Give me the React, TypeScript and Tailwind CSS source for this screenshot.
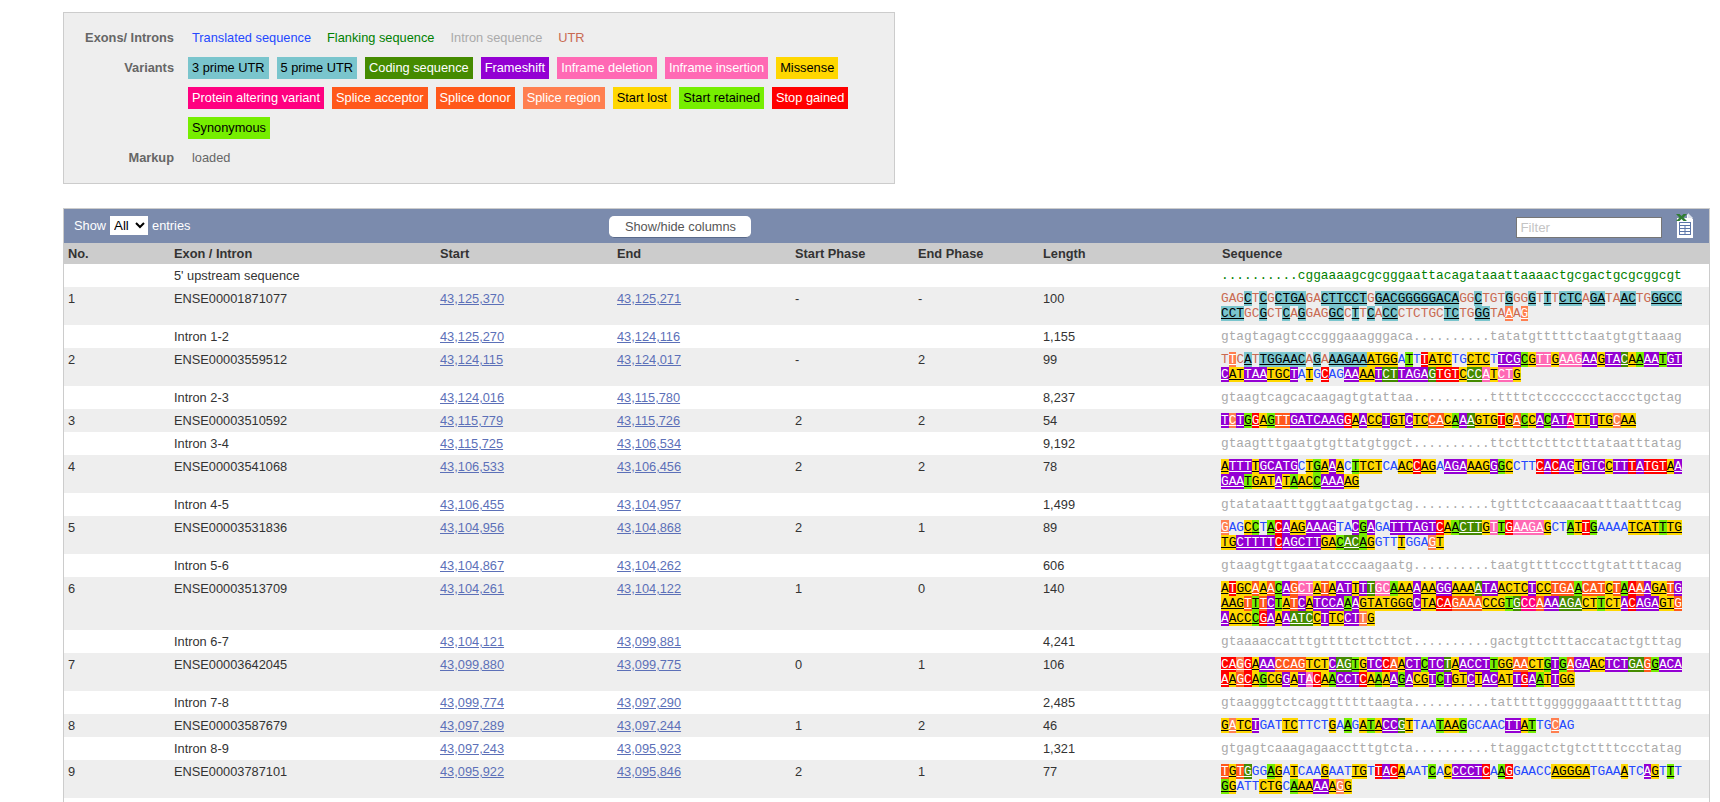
import { Fragment } from "react";

const spanColors: Record<string, string> = {
  u: "bg-[#7ac5cd] text-black underline",
  c: "bg-[#458b00] text-white underline",
  f: "bg-[#9400d3] text-white underline",
  d: "bg-[#ff69b4] text-white underline",
  m: "bg-[#ffd700] text-black underline",
  p: "bg-[#ff0080] text-white underline",
  a: "bg-[#ff581a] text-white underline",
  r: "bg-[#ff7f50] text-white underline",
  t: "bg-[#76ee00] text-black underline",
  s: "bg-[#ff0000] text-white underline",
  x: "text-[#c96a52]",
};

const variants = [
  { label: "3 prime UTR", cls: "bg-[#7ac5cd] text-black" },
  { label: "5 prime UTR", cls: "bg-[#7ac5cd] text-black" },
  { label: "Coding sequence", cls: "bg-[#458b00] text-white" },
  { label: "Frameshift", cls: "bg-[#9400d3] text-white" },
  { label: "Inframe deletion", cls: "bg-[#ff69b4] text-white" },
  { label: "Inframe insertion", cls: "bg-[#ff69b4] text-white" },
  { label: "Missense", cls: "bg-[#ffd700] text-black" },
  { label: "Protein altering variant", cls: "bg-[#ff0080] text-white" },
  { label: "Splice acceptor", cls: "bg-[#ff581a] text-white" },
  { label: "Splice donor", cls: "bg-[#ff581a] text-white" },
  { label: "Splice region", cls: "bg-[#ff7f50] text-white" },
  { label: "Start lost", cls: "bg-[#ffd700] text-black" },
  { label: "Start retained", cls: "bg-[#76ee00] text-black" },
  { label: "Stop gained", cls: "bg-[#ff0000] text-white" },
  { label: "Synonymous", cls: "bg-[#76ee00] text-black" },
];

interface Row {
  no?: string;
  name: string;
  start?: string;
  end?: string;
  startPhase?: string;
  endPhase?: string;
  length?: string;
  seq: string[];
  tone: string;
}

const BLUE = "text-[#2448ff]";
const UTR = "text-[#c96a52]";
const GREY = "text-[#aaaaaa]";
const FLANK = "text-[#008000]";

const rows: Row[] = [
  { name: "5' upstream sequence", tone: FLANK, seq: ["..........cggaaaagcgcgggaattacagataaattaaaactgcgactgcgcggcgt"] },
  {
    no: "1", name: "ENSE00001871077", start: "43,125,370", end: "43,125,271", startPhase: "-", endPhase: "-", length: "100", tone: UTR,
    seq: [
      "GAG[uC]T[uC]G[uCTGA]GA[uCTTCCT]G[uGACGGGGGACA]GG[uC]TGT[uG]GG[uG]T[uT]T[uCTC]A[uGA]TA[uAC]TG[uGGCC]",
      "[uCCT]GC[uG]CT[uC]A[uG]GAG[uGC]C[uT]T[uC]A[uCC]CTCTGC[uTC]TG[uGG]TA[rA]A[rG]",
    ],
  },
  { name: "Intron 1-2", start: "43,125,270", end: "43,124,116", length: "1,155", tone: GREY, seq: ["gtagtagagtcccgggaaagggaca..........tatatgtttttctaatgtgttaaag"] },
  {
    no: "2", name: "ENSE00003559512", start: "43,124,115", end: "43,124,017", startPhase: "-", endPhase: "2", length: "99", tone: BLUE,
    seq: [
      "[xT][rT][xC][uA][xT][uTGGAAC][xA][uG][xA][uAAGAA][mATGG]A[tT]T[sT][mATC]TG[mCTC]T[fTCG][tC][mG][dTT][mG][dAAG][fAA][mG][fTA][cC][mA][tA][fAA][tT][fGT]",
      "[fC][mAT][fTAA][mTGC][fT]A[mT]G[sC]AG[fAA][mAA][fT][cCT][fTAGA][cG][sTGT][mC][cCC][dA][mT][dCT][mG]",
    ],
  },
  { name: "Intron 2-3", start: "43,124,016", end: "43,115,780", length: "8,237", tone: GREY, seq: ["gtaagtcagcacaagagtgtattaa..........tttttctccccccctaccctgctag"] },
  {
    no: "3", name: "ENSE00003510592", start: "43,115,779", end: "43,115,726", startPhase: "2", endPhase: "2", length: "54", tone: BLUE,
    seq: ["[fT][rC][fT][tG][sG][mA][tG][aTT][fGATCAAG][sG][mA][fA][mCC][fT][mGT][fC][mTC][aCA][mC][tA][fA][cA][mGTG][sT][mG][aA][tC][mC][fA][tC][fAT][pA][mTT][fT][mTG][rC][mAA]"],
  },
  { name: "Intron 3-4", start: "43,115,725", end: "43,106,534", length: "9,192", tone: GREY, seq: ["gtaagtttgaatgtgttatgtggct..........ttctttctttctttataatttatag"] },
  {
    no: "4", name: "ENSE00003541068", start: "43,106,533", end: "43,106,456", startPhase: "2", endPhase: "2", length: "78", tone: BLUE,
    seq: [
      "[mA][fTTT][mT][fGCATG]C[mT][tG][mA][fA][mA]C[tT][mTCT]CA[mAC][sC][mAG]A[fAGA][mAAG][fG][tG][mC]CTT[sC][fA][sC][fAG][mT][fGTC][mC][fTT][sT][fA][sTGT][mA][fA]",
      "[fGAA][tT][mGAT][fA][mT][tA][mAC][tC][fAAA][mAG]",
    ],
  },
  { name: "Intron 4-5", start: "43,106,455", end: "43,104,957", length: "1,499", tone: GREY, seq: ["gtatataatttggtaatgatgctag..........tgtttctcaaacaatttaatttcag"] },
  {
    no: "5", name: "ENSE00003531836", start: "43,104,956", end: "43,104,868", startPhase: "2", endPhase: "1", length: "89", tone: BLUE,
    seq: [
      "[rG]AG[mC][tC]T[tA][sC][fA][mAG][fAAAG]TA[fC][tG][fA]GA[fTTTAGT][sC][mA][tA][cCTT][mG][dT][tT][sG][dAAGA][mG]CT[tA][mT][sT][tG]AAAA[mTCAT][tT][mTG]",
      "[mTG][fCTTTT][sC][fAGCTT][mGA][tC][cAC][tA][mG]GTT[mT]GGA[rG][mT]",
    ],
  },
  { name: "Intron 5-6", start: "43,104,867", end: "43,104,262", length: "606", tone: GREY, seq: ["gtaagtgttgaatatcccaagaatg..........taatgttttcccttgtattttacag"] },
  {
    no: "6", name: "ENSE00003513709", start: "43,104,261", end: "43,104,122", startPhase: "1", endPhase: "0", length: "140", tone: BLUE,
    seq: [
      "[mA][sT][mGC][aA][mA][aA][tC][fA][aG][dCT][mA][aT][mA][fAT][mT][fT][cT][dGC][tA][mAA][fA][mAA][fGG][mAAA][cA][fTA][mACTC][fT][mCC][aTGA][tA][aCAT][mC][aT][tA][sA][aA][fA][mGA][aT][fG]",
      "[mAAG][aT][tT][aT][fC][tT][mA][aT][fC][mA][fTCCA][tA][fA][mGTATGGG][fC][mTA][sCA][aGAAA][mCCG][tT][cG][pCC][aA][fAA][cAGA][mCT][tT][mCT][fA][sC][fAGA][mGT][aG]",
      "[fA][mACC][tC][sG][fA][mA][fA][cATC][mC][fT][mTC][fCT][rT][mG]",
    ],
  },
  { name: "Intron 6-7", start: "43,104,121", end: "43,099,881", length: "4,241", tone: GREY, seq: ["gtaaaaccatttgttttcttcttct..........gactgttctttaccatactgtttag"] },
  {
    no: "7", name: "ENSE00003642045", start: "43,099,880", end: "43,099,775", startPhase: "0", endPhase: "1", length: "106", tone: BLUE,
    seq: [
      "[sCA][rG][sG][mA][fAA][aCCAG][mTCT][fC][cAG][tT][mG][fTC][sC][aA][mA][fCT][tC][fTC][cT][mA][fACCT][tT][mGG][aAA][mCT][tG][fT][tG][aA][fGA][mAC][fTCT][cGA][aG][tG][fACA]",
      "[sA][mA][aG][sC][mA][tG][mCG][fG][mA][fT][dA][sC][mA][tA][fCCT][sC][mA][tA][mA][fA][tG][fA][mCG][fT][tC][fT][mGT][fC][mT][fAC][mAT][fT][sG][fA][tA][mT][fT][mGG]",
    ],
  },
  { name: "Intron 7-8", start: "43,099,774", end: "43,097,290", length: "2,485", tone: GREY, seq: ["gtaagggtctcaggttttttaagta..........tatttttggggggaaatttttttag"] },
  {
    no: "8", name: "ENSE00003587679", start: "43,097,289", end: "43,097,244", startPhase: "1", endPhase: "2", length: "46", tone: BLUE,
    seq: ["[mG][rA][mTC][fT]GAT[mTC]TTCT[mG]A[tA]G[mA][tT][mA][fCC][cG][mT]TAA[tT][mAA][tG]GCAAC[fTT][mA][tT]TG[rC]AG"],
  },
  { name: "Intron 8-9", start: "43,097,243", end: "43,095,923", length: "1,321", tone: GREY, seq: ["gtgagtcaaagagaacctttgtcta..........ttaggactctgtcttttccctatag"] },
  {
    no: "9", name: "ENSE00003787101", start: "43,095,922", end: "43,095,846", startPhase: "2", endPhase: "1", length: "77", tone: BLUE,
    seq: [
      "[aT][mG][aT][cG]GG[tA][mG]A[mT]CAA[mG]AAT[mTG]T[sT][fA][sC][mA]AAT[tC]A[mC][fCCCT][sC]A[tA][sG]GAACC[mAGGGA]TGAA[mA]TC[fA][mG]T[tT]T",
      "[tG][mG]ATT[mCTG]C[tA][mAA][fAA][mA][rG][mG]",
    ],
  },
];

function SeqLine({ text }: { text: string }) {
  const parts = text.match(/\[[a-z][A-Z]+\]|[^[\]]+/g) ?? [];
  return (
    <div className="whitespace-pre">
      {parts.map((part, i) =>
        part.startsWith("[") ? (
          <span key={i} className={spanColors[part[1]]}>
            {part.slice(2, -1)}
          </span>
        ) : (
          <Fragment key={i}>{part}</Fragment>
        )
      )}
    </div>
  );
}

function ExcelIcon() {
  return (
    <svg width="18" height="25" viewBox="0 0 18 25" className="block">
      <path d="M1 5h10V1l6 5v19H1z" fill="#fff" />
      <path d="M12 0l5 5h-5z" fill="#dfe5ee" />
      <path d="M0 1h3.500L5.500 3l2-2H11L7.500 4.500 11 8H7.500l-2-2-2 2H0l3.500-3.500z" fill="#2f7d32" />
      <rect x="3.500" y="9.500" width="11" height="12" fill="none" stroke="#5c76a8" strokeWidth="1" />
      <path d="M3.500 12.500h11M3.500 15.500h11M3.500 18.500h11M9 12.500v9" stroke="#5c76a8" strokeWidth="1" />
    </svg>
  );
}

function Legend() {
  return (
    <div className="ml-[63px] mt-3 h-[172px] w-[832px] border border-[#cccccc] bg-[#eeeeee] pt-[13px] text-[12.8px] leading-[15px]">
      <div className="flex h-[22px] items-center">
        <div className="w-[110px] text-right font-bold text-[#666666]">Exons/ Introns</div>
        <div className="ml-[14px] flex gap-2">
          <span className="px-1 text-[#2448ff]">Translated sequence</span>
          <span className="px-1 text-[#008000]">Flanking sequence</span>
          <span className="px-1 text-[#aaaaaa]">Intron sequence</span>
          <span className="px-1 text-[#c96a52]">UTR</span>
        </div>
      </div>
      <div className="mt-[9px] flex">
        <div className="w-[110px] text-right font-bold leading-[22px] text-[#666666]">Variants</div>
        <div className="ml-[14px] flex w-[690px] flex-wrap gap-2">
          {variants.map((v) => (
            <span key={v.label} className={`px-1 pb-1 pt-[3px] ${v.cls}`}>
              {v.label}
            </span>
          ))}
        </div>
      </div>
      <div className="mt-[7px] flex h-[22px] items-center">
        <div className="w-[110px] text-right font-bold text-[#666666]">Markup</div>
        <div className="ml-[14px] px-1 text-[#666666]">loaded</div>
      </div>
    </div>
  );
}

export default function App() {
  return (
    <div className="flex h-[802px] flex-col overflow-hidden bg-white font-['Liberation_Sans',Arial,sans-serif] text-[12.8px] leading-[15px] text-[#333333]">
      <Legend />
      <div className="ml-[63px] mr-[10px] mt-6 flex-1 border-x border-t border-[#cccccc]">
        <div className="flex h-[34px] items-start bg-[#7b8bad] text-white">
          <div className="ml-[10px] flex h-[33px] items-center">
            <span>Show</span>
            <select defaultValue="All" className="mx-1 h-[19px] w-[38px] bg-white text-[13.3px] text-black">
              <option>All</option>
            </select>
            <span>entries</span>
          </div>
          <button className="ml-[419px] mt-[7px] h-[22px] w-[142px] rounded-[5px] border-b border-[#5a6a8a] bg-white text-[12.8px] text-[#555555]">
            Show/hide columns
          </button>
          <input
            placeholder="Filter"
            className="ml-[765px] mt-2 h-[21px] w-[146px] border border-[#767676] bg-white px-[3px] text-[13.3px] placeholder:text-[#c4c4c4]"
          />
          <div className="ml-[14px] mt-1">
            <ExcelIcon />
          </div>
        </div>
        <table className="w-full table-fixed border-collapse">
          <colgroup>
            <col className="w-[106px]" />
            <col className="w-[266px]" />
            <col className="w-[177px]" />
            <col className="w-[178px]" />
            <col className="w-[123px]" />
            <col className="w-[125px]" />
            <col className="w-[178px]" />
            <col />
          </colgroup>
          <thead>
            <tr className="bg-[#cccccc] text-left">
              {["No.", "Exon / Intron", "Start", "End", "Start Phase", "End Phase", "Length"].map((h) => (
                <th key={h} className="px-1 py-[3px] font-bold">
                  {h}
                </th>
              ))}
              <th className="pl-[5px] pr-1 py-[3px] font-bold">Sequence</th>
            </tr>
          </thead>
          <tbody>
            {rows.map((r) => (
              <tr key={r.name} className={r.no ? "bg-[#eeeeee] align-top" : "bg-white align-top"}>
                <td className="px-1 py-1">{r.no}</td>
                <td className="px-1 py-1">{r.name}</td>
                <td className="px-1 py-1">
                  <a className="text-[#5c70b8] underline">{r.start}</a>
                </td>
                <td className="px-1 py-1">
                  <a className="text-[#5c70b8] underline">{r.end}</a>
                </td>
                <td className="px-1 py-1">{r.startPhase}</td>
                <td className="px-1 py-1">{r.endPhase}</td>
                <td className="px-1 py-1">{r.length}</td>
                <td className={`px-1 py-1 font-['Liberation_Mono',monospace] ${r.tone}`}>
                  {r.seq.map((line, i) => (
                    <SeqLine key={i} text={line} />
                  ))}
                </td>
              </tr>
            ))}
          </tbody>
        </table>
      </div>
    </div>
  );
}
